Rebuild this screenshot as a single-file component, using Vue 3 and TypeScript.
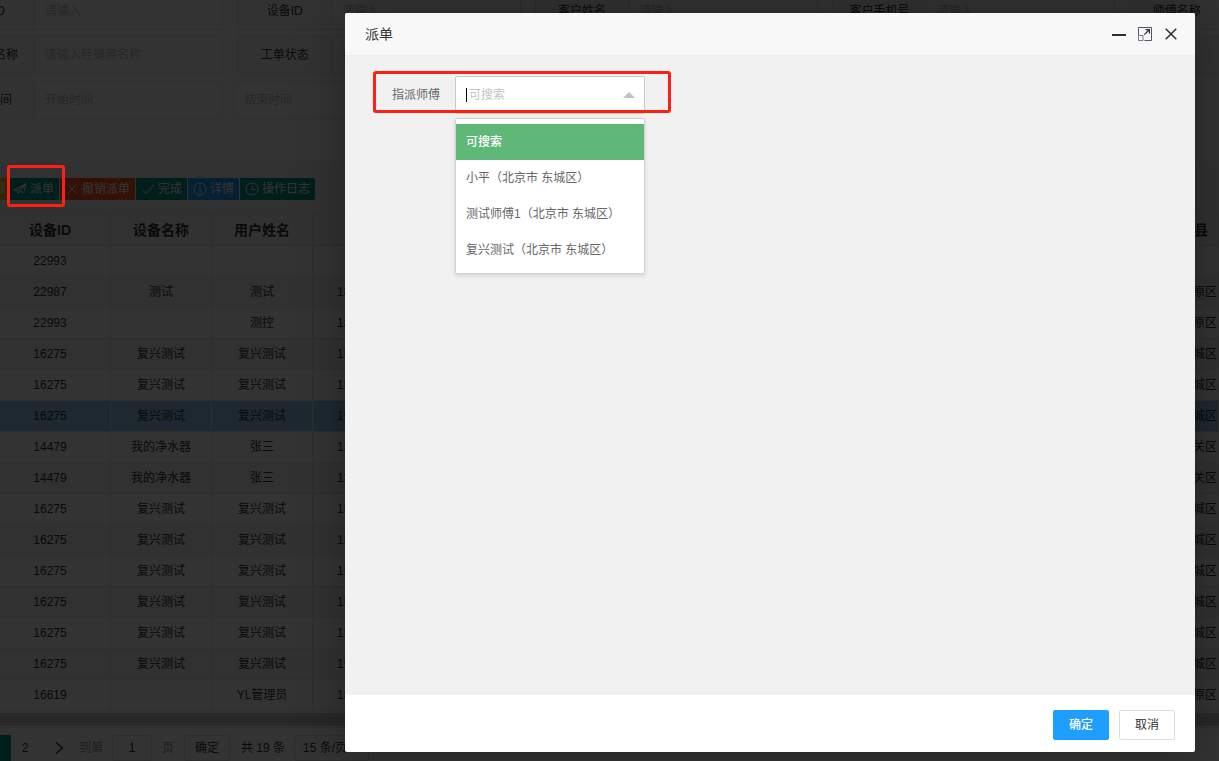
<script setup lang="ts">
import { ref } from 'vue'

interface Field {
  label: string
  placeholder: string
}

interface Row {
  id: string
  device: string
  user: string
  phone: string
  area: string
}

const fieldRows: Field[][] = [
  [
    { label: '经销商ID', placeholder: '请输入' },
    { label: '设备ID', placeholder: '请输入' },
    { label: '客户姓名', placeholder: '请输入' },
    { label: '客户手机号', placeholder: '请输入' },
    { label: '师傅名称', placeholder: '' },
  ],
  [
    { label: '经销商名称', placeholder: '请输入经销商名称' },
    { label: '工单状态', placeholder: '请选择' },
    { label: '', placeholder: '' },
    { label: '', placeholder: '' },
    { label: '', placeholder: '' },
  ],
]

const make = (id: string, device: string, user: string, phone: string, area: string): Row => ({
  id, device, user, phone, area,
})

const rows: Row[] = [
  make('22993', '', '', '', ''),
  make('22987', '测试', '测试', '18', '原区'),
  make('22993', '', '测控', '18', '原区'),
  make('16275', '复兴测试', '复兴测试', '15', '城区'),
  make('16275', '复兴测试', '复兴测试', '15', '城区'),
  make('16275', '复兴测试', '复兴测试', '15', '城区'),
  make('14479', '我的净水器', '张三', '13', '关区'),
  make('14479', '我的净水器', '张三', '13', '关区'),
  make('16275', '复兴测试', '复兴测试', '15', '城区'),
  make('16275', '复兴测试', '复兴测试', '15', '城区'),
  make('16275', '复兴测试', '复兴测试', '15', '城区'),
  make('16275', '复兴测试', '复兴测试', '15', '城区'),
  make('16275', '复兴测试', '复兴测试', '15', '城区'),
  make('16275', '复兴测试', '复兴测试', '15', '城区'),
  make('16619', '', 'YL管理员', '18', '原区'),
]

const selectedRow = ref(5)
const options = ['可搜索', '小平（北京市 东城区）', '测试师傅1（北京市 东城区）', '复兴测试（北京市 东城区）']
const picked = ref(0)
</script>

<template>
  <div class="screen">
    <div class="page">
      <section class="search">
        <div v-for="(line, i) in fieldRows" :key="i" class="field-row">
          <div v-for="(f, j) in line" :key="j" class="field">
            <span class="field-label" :class="{ tail: j === 0 }">{{ f.label }}</span>
            <span class="field-input">{{ f.placeholder }}</span>
          </div>
        </div>
        <div class="field-row dates">
          <div class="field">
            <span class="field-label time">创建时间</span>
            <span class="field-input">开始时间</span>
          </div>
          <div class="field"><span class="field-input">结束时间</span></div>
        </div>
      </section>

      <div class="toolbar">
        <span class="btn yellow">编辑</span>
        <span class="btn teal send">
          <svg width="14" height="14" viewBox="0 0 14 14"><path d="M.8 8.2 13 1.5 10.8 11 7 9.1 5.1 12 4.6 8.5ZM4.6 8.5 13 1.5 7 9.1" /></svg>派单
        </span>
        <span class="btn red">
          <svg width="14" height="14" viewBox="0 0 14 14"><path d="m2.5 2.5 9 9m0-9-9 9" /></svg>撤销派单
        </span>
        <span class="btn teal done">
          <svg width="14" height="14" viewBox="0 0 14 14"><path d="m1 7.5 4 4 8-8.5" /></svg>完成
        </span>
        <span class="btn blue">
          <svg width="14" height="14" viewBox="0 0 14 14"><circle cx="7" cy="7" r="6" /><path d="M7.3 3.5v1.3M6 6.3h1.2v3.8m-1.2 0h2.4" /></svg>详情
        </span>
        <span class="btn teal log">
          <svg width="14" height="14" viewBox="0 0 14 14"><circle cx="7" cy="7" r="6" /><path d="M7 3.3v4.2h3.6" /></svg>操作日志
        </span>
      </div>

      <div class="table">
        <div class="tr head">
          <span class="td id">设备ID</span><span class="td">设备名称</span><span class="td">用户姓名</span>
          <span class="td phone"></span><span class="td area">县</span>
        </div>
        <div v-for="(r, i) in rows" :key="i" class="tr" :class="{ even: i % 2 === 1, active: i === selectedRow }">
          <span class="td id">{{ r.id }}</span><span class="td">{{ r.device }}</span><span class="td">{{ r.user }}</span>
          <span class="td phone">{{ r.phone }}</span><span class="td area">{{ r.area }}</span>
        </div>
      </div>
      <div class="scrollbar"></div>

      <div class="pager">
        <span class="current"></span>
        <span class="num">2</span>
        <svg class="next" width="12" height="14" viewBox="0 0 12 14"><path d="m2 1.5 6.5 5.5L2 12.5" /></svg>
        <span class="muted">到第</span>
        <span class="box jump">1</span>
        <span class="muted">页</span>
        <span class="box go">确定</span>
        <span class="total">共 19 条</span>
        <span class="box size">15 条/页</span>
      </div>
    </div>

    <div class="shade"></div>
    <div class="mark mark-send"></div>

    <div class="dialog">
      <header class="title">
        <span>派单</span>
        <div class="controls">
          <svg width="14" height="16" viewBox="0 0 14 16"><path d="M0 9h14" stroke-width="2" /></svg>
          <svg width="14" height="16" viewBox="0 0 14 16">
            <path d="M.5 9V1.5h13v13H6.5" stroke-opacity=".8" />
            <path d="M.5 9.5H5v5H.5z" stroke-opacity=".6" />
            <path d="M6.3 8.7 11 4M7.5 3.6h3.9v3.9" stroke-width="1.2" />
          </svg>
          <svg width="12" height="16" viewBox="0 0 12 16"><path d="m.7 2.7 10.6 10.6m0-10.6L.7 13.3" stroke-width="1.5" /></svg>
        </div>
      </header>
      <main class="body">
        <label class="form-label">指派师傅</label>
        <div class="select">
          <div class="select-input"><i class="caret"></i><span>可搜索</span><i class="arrow"></i></div>
          <div class="menu">
            <div v-for="(o, i) in options" :key="o" class="option" :class="{ chosen: i === picked }" @click="picked = i">{{ o }}</div>
          </div>
        </div>
        <div class="mark mark-field"></div>
      </main>
      <footer class="footer">
        <span class="action primary">确定</span>
        <span class="action">取消</span>
      </footer>
    </div>
  </div>
</template>

<style>
html,
body {
  margin: 0;
  overflow: hidden;
}
</style>

<style scoped>
* {
  box-sizing: border-box;
}
.screen {
  position: relative;
  width: 1219px;
  height: 761px;
  overflow: hidden;
  font: 12px/18px "Liberation Sans", "Noto Sans CJK SC", sans-serif;
  color: #333;
}
svg {
  fill: none;
  stroke: currentColor;
  flex: none;
}
.page {
  display: flow-root;
  height: 761px;
  background: #fff;
  overflow: hidden;
}
.search {
  display: flex;
  flex-direction: column;
  gap: 6px;
  height: 171px;
  margin-top: -8px;
  border-bottom: 1px solid #eaeaea;
}
.field-row {
  display: flex;
  gap: 14px;
  width: 1480px;
  margin-left: -60px;
}
.field {
  display: flex;
  width: 283.3px;
  height: 38px;
  border: 1px solid #e6e6e6;
  border-radius: 2px;
}
.field-label {
  width: 94px;
  border-right: 1px solid #e6e6e6;
  text-align: center;
  line-height: 36px;
  background: #fbfbfb;
  white-space: nowrap;
}
.field-label.tail {
  text-align: right;
  padding-right: 16px;
}
.field-row:first-child .tail {
  padding-right: 29px;
}
.field-label.time {
  text-align: right;
  padding-right: 22px;
}
.field-input {
  padding-left: 10px;
  line-height: 36px;
  color: #c4c4c4;
}
.dates {
  gap: 10px;
  margin-top: 1px;
}
.toolbar {
  display: flex;
  gap: 1px;
  height: 51px;
  padding-top: 15px;
  background: #f5f5f5;
}
.btn {
  display: flex;
  align-items: center;
  gap: 3px;
  height: 22px;
  padding-left: 5px;
  color: #fff;
  white-space: nowrap;
}
.btn.yellow {
  width: 9px;
  padding: 0 4px 0 0;
  justify-content: flex-end;
  background: #ffb800;
}
.teal {
  background: #009688;
}
.btn.send {
  width: 49px;
  padding-left: 3px;
}
.btn.red {
  width: 75px;
  background: #ff5722;
}
.btn.done {
  width: 51px;
}
.btn.blue {
  width: 51px;
  background: #1e9fff;
}
.btn.log {
  width: 75px;
  border-radius: 0 2px 2px 0;
}
.table {
  border-top: 1px solid #e6e6e6;
}
.tr {
  display: flex;
  height: 31px;
  border-bottom: 1px solid #e6e6e6;
  background: #fff;
}
.tr.head {
  background: #f5f5f5;
  font-size: 14px;
  font-weight: 700;
}
.tr.even {
  background: #f2f2f2;
}
.tr.active {
  background: #93c8ee;
}
.td {
  width: 101px;
  line-height: 30px;
  text-align: center;
  border-right: 1px solid #e6e6e6;
}
.td.id {
  width: 121px;
  margin-left: -10px;
}
.td.phone {
  width: 122px;
  padding-left: 24px;
  text-align: left;
}
.td.area {
  margin-left: auto;
  padding-right: 1px;
  text-align: right;
}
.head .area {
  padding-right: 10px;
}
.scrollbar {
  height: 13px;
  margin: 2px 0 1px;
  background: #c8c8c8;
}
.pager {
  display: flex;
  align-items: flex-start;
  padding-top: 7px;
  border-top: 1px solid #e6e6e6;
  line-height: 26px;
  white-space: nowrap;
}
.current {
  width: 11px;
  height: 26px;
  background: #009688;
}
.num {
  width: 28px;
  text-align: center;
}
.next {
  margin: 6px 13px 0 15px;
  stroke-width: 1.4;
}
.muted {
  width: 33px;
  color: #999;
}
.box {
  height: 26px;
  line-height: 24px;
  border: 1px solid #e2e2e2;
  border-radius: 2px;
  text-align: center;
}
.jump {
  width: 40px;
  margin-right: 10px;
}
.muted + .go {
  width: 46px;
  margin: 0 11px 0 -11px;
}
.total {
  width: 53px;
}
.size {
  width: 75px;
  padding-left: 8px;
  text-align: left;
}
.shade {
  position: absolute;
  inset: 0;
  background: rgba(0, 0, 0, 0.8);
}
.mark {
  position: absolute;
  border: 3px solid #ff2015;
  border-radius: 3px;
}
.mark-send {
  left: 7px;
  top: 165px;
  width: 58px;
  height: 42px;
}
.dialog {
  position: absolute;
  left: 345px;
  top: 13px;
  display: flex;
  flex-direction: column;
  width: 850px;
  height: 739px;
  border-radius: 2px;
  background: #fff;
  box-shadow: 1px 1px 50px rgba(0, 0, 0, 0.3);
}
.title {
  display: flex;
  justify-content: space-between;
  height: 43px;
  padding: 0 18px 0 20px;
  border-bottom: 1px solid #eee;
  border-radius: 2px 2px 0 0;
  background: #f8f8f8;
  font-size: 14px;
  line-height: 42px;
}
.controls {
  display: flex;
  align-items: center;
  gap: 12px;
  color: #2d2c3b;
}
.controls svg:last-child {
  margin-left: 1px;
}
.body {
  position: relative;
  display: flex;
  align-items: flex-start;
  height: 639px;
  padding: 20px 0 0 47px;
  background: #f1f1f1;
}
.form-label {
  width: 63px;
  line-height: 38px;
  color: #666;
}
.select {
  width: 190px;
  color: #666;
}
.select-input {
  display: flex;
  align-items: center;
  height: 38px;
  padding: 0 9px 0 10px;
  border: 1px solid #c9c9c9;
  border-radius: 2px;
  background: #fff;
  color: #c4c4c4;
}
.caret {
  width: 1px;
  height: 14px;
  margin-right: 2px;
  background: #000;
}
.arrow {
  margin-left: auto;
  border: 6px solid transparent;
  border-top: 0;
  border-bottom-color: #c2c2c2;
}
.menu {
  margin-top: 4px;
  padding: 5px 0;
  border: 1px solid #d2d2d2;
  border-radius: 2px;
  background: #fff;
  box-shadow: 0 2px 4px rgba(0, 0, 0, 0.12);
}
.option {
  height: 36px;
  padding: 0 10px;
  line-height: 36px;
  white-space: nowrap;
}
.option.chosen {
  background: #5fb878;
  color: #fff;
  font-weight: 500;
}
.mark-field {
  left: 28px;
  top: 15px;
  width: 298px;
  height: 42px;
}
.footer {
  display: flex;
  justify-content: flex-end;
  gap: 10px;
  padding: 15px 20px 0 0;
}
.action {
  width: 56px;
  height: 30px;
  border: 1px solid #dedede;
  border-radius: 2px;
  line-height: 28px;
  text-align: center;
}
.primary {
  border-color: #1e9fff;
  background: #1e9fff;
  color: #fff;
  font-weight: 500;
}
</style>
